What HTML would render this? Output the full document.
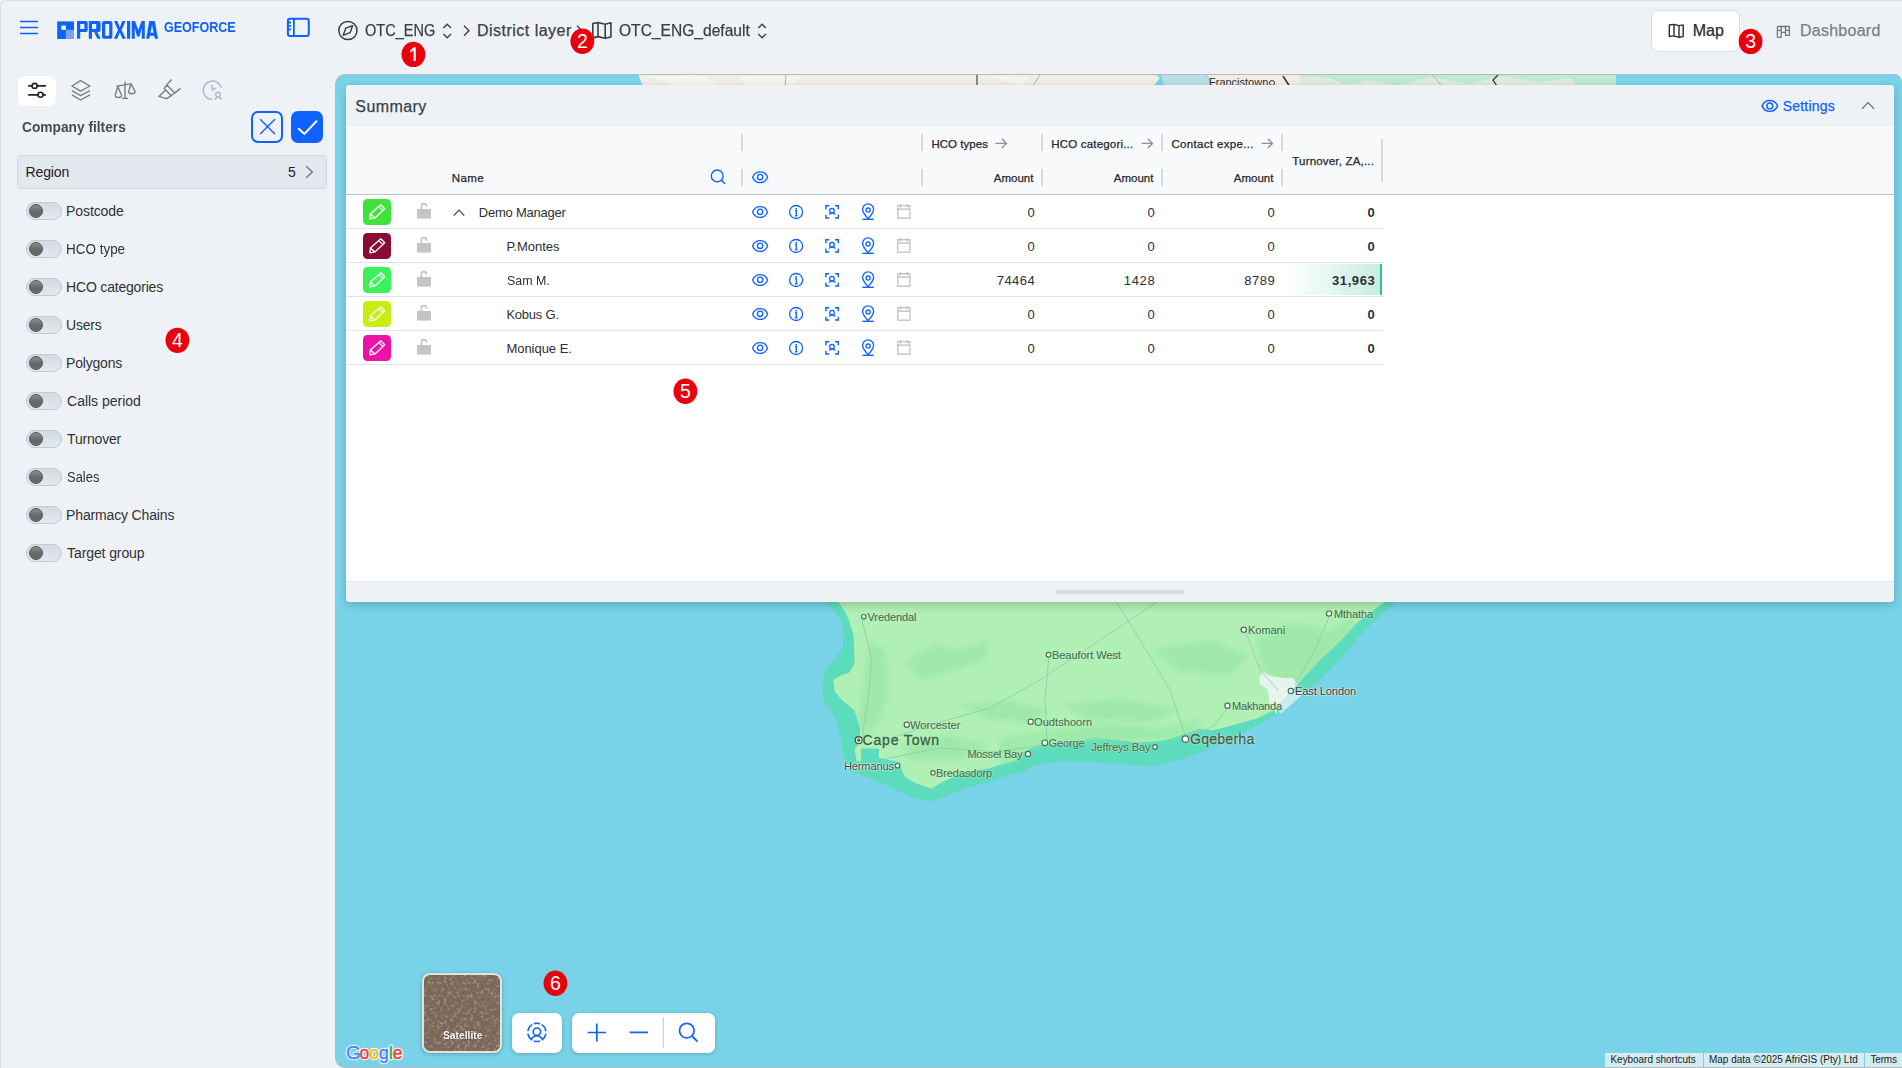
<!DOCTYPE html>
<html><head><meta charset="utf-8">
<style>
*{box-sizing:border-box;margin:0;padding:0}
html,body{width:1902px;height:1068px;overflow:hidden;background:#eef2f6;font-family:"Liberation Sans",sans-serif;color:#393c44}
.a{position:absolute}
svg{position:absolute;overflow:visible}
.tx{position:absolute;white-space:nowrap;line-height:1;z-index:50}
.badge{position:absolute;z-index:60;width:24px;height:24px;border-radius:50%;background:#e10010;color:#fff;font:bold 17px "Liberation Sans",sans-serif;text-align:center;line-height:24px}
#frame{position:absolute;left:0;top:0;width:1902px;height:1068px;border-top:1px solid #dde1e6;border-left:1px solid #dde1e6;border-top-left-radius:6px}
.tog{position:absolute;left:26px;width:36px;height:18px;border-radius:9px;border:1px solid #c3c9d0;background:linear-gradient(180deg,#d3dbe3,#e2e8ee)}
.tog i{position:absolute;left:2px;top:1px;width:14px;height:14px;border-radius:50%;background:linear-gradient(180deg,#8c8c8a,#666 60%,#6c6c6c);border:1px solid #53575c}
#map{position:absolute;left:335px;top:74px;width:1567px;height:994px;background:#78d3e9;border:1px solid #b4bcc0;border-right:0;border-radius:10px 8px 0 10px;overflow:hidden}
#panel{position:absolute;left:346px;top:85px;width:1548px;height:517px;background:#fff;border-radius:4px;overflow:hidden;box-shadow:0 3px 10px rgba(0,0,0,.2)}
.rsep{position:absolute;left:0;width:1037px;height:1px;background:#dfe2e6}
.sq{position:absolute;left:17px;width:28px;height:26px;border-radius:4.5px}
.ctl{position:absolute;background:#fff;border-radius:7px;box-shadow:0 1px 4px rgba(0,0,0,.2)}
.lbl{position:absolute;font-size:11px;line-height:1;color:#4f6f5a;white-space:nowrap;text-shadow:0 0 2px #c8f5cc,0 0 1px #c8f5cc}
.dot{position:absolute;width:6px;height:6px;border:1.3px solid #4f6f5a;border-radius:50%}
.vd{position:absolute;width:2px;background:#d5d8dc}
</style></head><body>
<div id="frame"></div>

<div class="a" style="left:1651px;top:9.5px;width:89px;height:42px;background:#fff;border:1px solid #dadde2;border-radius:7px"></div>

<div class="a" style="left:18px;top:76px;width:38px;height:30px;background:#fff;border-radius:6px;box-shadow:0 0 2px rgba(0,0,0,.07)"></div>
<div class="a" style="left:251px;top:111px;width:32px;height:32px;border:2px solid #0f62fe;border-radius:7px"></div>
<div class="a" style="left:291px;top:111px;width:32px;height:32px;background:#0f62fe;border-radius:7px"></div>
<div class="a" style="left:17px;top:155px;width:310px;height:34px;background:#e3e8ee;border:1px solid #d2d7dd;border-radius:4px"></div>
<div class="tog" style="top:202px"><i></i></div>
<div class="tog" style="top:240px"><i></i></div>
<div class="tog" style="top:278px"><i></i></div>
<div class="tog" style="top:316px"><i></i></div>
<div class="tog" style="top:354px"><i></i></div>
<div class="tog" style="top:392px"><i></i></div>
<div class="tog" style="top:430px"><i></i></div>
<div class="tog" style="top:468px"><i></i></div>
<div class="tog" style="top:506px"><i></i></div>
<div class="tog" style="top:544px"><i></i></div>

<div id="map">

<svg style="left:-336px;top:-75px" width="1902" height="1068">
 <defs>
  <clipPath id="land"><path d="M838 560 L838.4 602.1 L847.3 615.8 L853.6 634.7 L854.7 663.1 L849.4 672.6 L840 675.7 L833.6 679.9 L834.7 691.5 L842 700 L854.7 710.8 L860.5 729.7 L858.9 742.3 L854.7 749.7 L856.8 761.2 L861 761.2 L861 748.6 L878.9 748.6 L878.9 758.1 L899.9 762.3 L901 768.6 L905.2 777 L915.7 783.3 L931.4 788.6 L942 782.3 L957.7 774.9 L973.5 770.7 L989.3 768.6 L1000 764.4 L1015.8 760.2 L1028.4 748.6 L1042 744.4 L1073.6 741.3 L1094.6 737.1 L1110.4 739.2 L1136.7 742.3 L1155.6 741.3 L1168.2 739.2 L1184 733.9 L1200 728.6 L1212 730.4 L1230 725.9 L1257 718.4 L1275 709.4 L1290 692.9 L1299 682.4 L1320 660 L1339.4 642 L1357.4 622.5 L1384.3 602 L1400 560Z"/></clipPath>
  <filter id="soft" x="-10%" y="-10%" width="120%" height="120%"><feGaussianBlur stdDeviation="2.5"/></filter>
  <filter id="tex" x="0" y="0" width="100%" height="100%"><feTurbulence type="fractalNoise" baseFrequency="0.3" numOctaves="4" seed="11"/><feColorMatrix values="0 0 0 0 0.62  0 0 0 0 0.55  0 0 0 0 0.47  0 0 0 1.3 -0.62"/></filter>
 </defs>
 <!-- top strip land -->
 <path d="M637 70 L1150 70 L1160 78 L1150 90 L645 90 L641 82Z" fill="#f1eee6"/><path d="M650 76 L700 75 L720 84 L680 88Z M740 76 L800 77 L790 86 L745 85Z M990 76 L1030 78 L1020 86Z" fill="#f7f5f0"/>
 <path d="M1205 70 L1300 70 L1300 90 L1215 90 Z" fill="#f1ede4"/>
 <path d="M1160 70 L1205 70 L1212 90 L1165 90 Z" fill="#b9dfe6"/>
 <path d="M1300 70 L1616 70 L1616 90 L1300 90Z" fill="#bfe9d3"/>
 <path d="M1300 76 L1330 78 L1345 85 L1370 80 L1400 86 L1430 77 L1470 84 L1500 76 L1540 82 L1570 78 L1580 90 L1300 90Z" fill="#e9ecdf" opacity=".8"/>
 <path d="M977 74V90" stroke="#444" stroke-width="1.2"/><path d="M786 74L785 90" stroke="#9aa3c4" stroke-width="0.9"/>
 <path d="M1283 76L1292 90" stroke="#333" stroke-width="1.5"/>
 <path d="M1498 75L1493 80L1497 86" stroke="#333" stroke-width="1.3" fill="none"/>
 <path d="M1040 75L1030 90 M1432 74L1445 90" stroke="#aab0dd" stroke-width="1" fill="none"/>
 <text x="1209" y="86" font-family="Liberation Sans" font-size="11" fill="#333">Francistown</text>
 <circle cx="1272" cy="83" r="2.5" fill="none" stroke="#333" stroke-width="1"/>
 <!-- south africa -->
 <path d="M816 560 L825.2 602.1 L834.7 611.6 L841 621 L843.6 631.5 L843.1 647.3 L834.7 658.9 L826.3 668.3 L822.6 679.9 L823.1 700 L834.7 716 L840 737 L844.2 758.1 L849.4 770.7 L868.3 778.1 L884.1 784.4 L899.9 791.7 L915.7 799.1 L931.4 801.2 L947.2 796 L968.2 787.5 L989.3 782.3 L1000 778.1 L1026.3 770.7 L1033.6 765.5 L1063.1 760.7 L1094.6 762.3 L1126.2 764.4 L1152.5 766.5 L1178.8 760.2 L1200 753 L1245 731.9 L1278 713.9 L1303.4 694.4 L1320 679.4 L1335 664.4 L1350 648 L1365 630 L1396 602 L1420 560Z" fill="#5ddcbd"/>
 <path d="M838 560 L838.4 602.1 L847.3 615.8 L853.6 634.7 L854.7 663.1 L849.4 672.6 L840 675.7 L833.6 679.9 L834.7 691.5 L842 700 L854.7 710.8 L860.5 729.7 L858.9 742.3 L854.7 749.7 L856.8 761.2 L861 761.2 L861 748.6 L878.9 748.6 L878.9 758.1 L899.9 762.3 L901 768.6 L905.2 777 L915.7 783.3 L931.4 788.6 L942 782.3 L957.7 774.9 L973.5 770.7 L989.3 768.6 L1000 764.4 L1015.8 760.2 L1028.4 748.6 L1042 744.4 L1073.6 741.3 L1094.6 737.1 L1110.4 739.2 L1136.7 742.3 L1155.6 741.3 L1168.2 739.2 L1184 733.9 L1200 728.6 L1212 730.4 L1230 725.9 L1257 718.4 L1275 709.4 L1290 692.9 L1299 682.4 L1320 660 L1339.4 642 L1357.4 622.5 L1384.3 602 L1400 560Z" fill="#b1f0b5"/>
 <path d="M1000 738 L1050 730 L1100 724 L1160 728 L1200 719 L1200 728.6 L1184 733.9 L1168.2 739.2 L1110.4 739.2 L1073.6 741.3 L1042 744.4 L1028.4 748.6 L1015.8 760.2 L1000 764.4Z" fill="#9ae9a7" opacity=".8" filter="url(#soft)"/>
 <!-- darker patches -->
 <g clip-path="url(#land)"><g fill="#9de8a8" opacity=".9" filter="url(#soft)">
  <path d="M870 640 L885 650 L890 690 L880 720 L868 735 L858 725 L862 690Z"/>
  <path d="M905 660 L935 645 L960 650 L990 640 L985 660 L950 672 L920 680Z"/>
  <path d="M960 705 L1010 700 L1050 712 L1030 722 L990 720Z"/>
  <path d="M1060 705 L1120 698 L1180 710 L1150 722 L1090 720Z"/>
  <path d="M1060 740 L1120 730 L1160 735 L1120 742Z"/>
  <path d="M1150 650 L1210 640 L1250 655 L1230 675 L1180 672Z"/>
  <path d="M1255 640 L1290 622 L1330 630 L1350 618 L1362 630 L1320 670 L1300 684 L1285 690 L1262 668Z"/>
  <path d="M900 745 L950 735 L990 745 L960 760 L910 760Z"/>
 </g></g>
 <path d="M1259.2 677.9 L1263 672 L1270 676 L1284 678 L1293 678 L1297 684 L1290 693 L1278 705 L1276.4 714 L1269 702 L1268 690 L1260 684Z" fill="#e6f4ee"/>
 <path d="M1278 705 L1290 693 L1303 692 L1300 697 L1280 714Z" fill="#c8ebf0"/>
 <!-- roads -->
 <g stroke="#8cc9b4" stroke-width="1" fill="none" opacity=".8">
  <path d="M862 620 L872 660 L868 700 L862 738"/>
  <path d="M880 742 L930 725 L990 708 L1040 680 L1100 640 L1160 600"/>
  <path d="M1049 656 L1045 700 L1047 740"/>
  <path d="M1115 600 L1140 640 L1170 690 L1185 735"/>
  <path d="M1230 705 L1215 725 L1190 738"/>
  <path d="M1245 630 L1260 670 L1278 690"/>
  <path d="M1330 615 L1315 650 L1295 685"/>
  <path d="M880 760 L940 748 L1000 752 L1040 745"/>
 </g>
 <!-- labels dots -->
 <g fill="#fff" stroke="#46714f" stroke-width="1.2">
  <circle cx="863.8" cy="616.7" r="2.2"/><circle cx="1329" cy="613.6" r="2.6"/><circle cx="1243.7" cy="629.8" r="2.6"/>
  <circle cx="1048.5" cy="654.7" r="2.4"/><circle cx="1290.8" cy="691" r="2.6"/><circle cx="1227.5" cy="705.8" r="2.6"/>
  <circle cx="906.8" cy="724.7" r="2.6"/><circle cx="1030.7" cy="721.7" r="2.6"/><circle cx="1044.8" cy="742.8" r="2.8"/>
  <circle cx="1155" cy="746.9" r="2.2"/><circle cx="1185.4" cy="739" r="3.2"/><circle cx="1028" cy="754" r="2.6"/>
  <circle cx="897.6" cy="765.7" r="2.2"/><circle cx="933" cy="772.8" r="2.2"/>
 </g>
 <circle cx="858.7" cy="740.2" r="3.4" fill="#fff" stroke="#35633f" stroke-width="1.4"/><circle cx="858.7" cy="740.2" r="1.6" fill="#35633f"/>
 <!-- google logo -->
 <g font-family="Liberation Sans" fill="#fff" stroke="#fff" stroke-width="2.4" stroke-linejoin="round"><text x="346" y="1058.8" font-size="19">G</text><text x="359.4" y="1058.8" font-size="17.5">o</text><text x="369.2" y="1058.8" font-size="17.5">o</text><text x="379" y="1058.8" font-size="17.5">g</text><text x="388.9" y="1058.8" font-size="17.5">l</text><text x="392.7" y="1058.8" font-size="17.5">e</text></g>
 <g font-family="Liberation Sans" stroke-width="0.45"><text x="346" y="1058.8" font-size="19" fill="#4285f4" stroke="#4285f4">G</text><text x="359.4" y="1058.8" font-size="17.5" fill="#ea4335" stroke="#ea4335">o</text><text x="369.2" y="1058.8" font-size="17.5" fill="#fbbc05" stroke="#fbbc05">o</text><text x="379" y="1058.8" font-size="17.5" fill="#4285f4" stroke="#4285f4">g</text><text x="388.9" y="1058.8" font-size="17.5" fill="#34a853" stroke="#34a853">l</text><text x="392.7" y="1058.8" font-size="17.5" fill="#ea4335" stroke="#ea4335">e</text></g>
</svg>
<!-- satellite tile -->
<div class="a" style="left:86px;top:898px;width:80px;height:80px;border-radius:8px;border:2px solid #e2e2e2;overflow:hidden;background:#7a6856;box-shadow:0 1px 4px rgba(0,0,0,.25)">
 <svg style="left:0;top:0" width="79" height="79"><rect width="79" height="79" filter="url(#tex)"/></svg>
</div>
<!-- locate -->
<div class="ctl" style="left:176px;top:938px;width:50px;height:40px"></div>
<!-- zoom group -->
<div class="ctl" style="left:236.3px;top:938px;width:142.6px;height:40px"></div>
<!-- attribution -->
<div class="a" style="left:1269px;top:978px;width:98px;height:15px;background:rgba(245,245,245,.72)"></div>
<div class="a" style="left:1368px;top:978px;width:160px;height:15px;background:rgba(245,245,245,.72)"></div>
<div class="a" style="left:1529px;top:978px;width:37px;height:15px;background:rgba(245,245,245,.72)"></div>

</div>

<div id="panel">
 <div class="a" style="left:0;top:0;width:1548px;height:41px;background:#eef2f5"></div>
 <div class="a" style="left:0;top:41px;width:1548px;height:68px;background:#f7f9fb"></div>
 <div class="a" style="left:0;top:109px;width:1548px;height:1px;background:#bcc2ca"></div>
 <div class="a" style="left:0;top:496px;width:1548px;height:21px;background:#eef2f5;border-top:1px solid #e4e7eb"></div>
 <div class="a" style="left:710px;top:505px;width:128px;height:4px;background:#d7dade;border-radius:2px"></div>
 <div class="rsep" style="top:143px"></div>
 <div class="rsep" style="top:177px"></div>
 <div class="rsep" style="top:211px"></div>
 <div class="rsep" style="top:245px"></div>
 <div class="rsep" style="top:279px"></div>
 <div class="vd" style="left:395px;top:49px;height:17px"></div><div class="vd" style="left:395px;top:83.5px;height:17px"></div>
 <div class="vd" style="left:575px;top:49px;height:17px"></div><div class="vd" style="left:575px;top:83.5px;height:17px"></div>
 <div class="vd" style="left:695px;top:49px;height:17px"></div><div class="vd" style="left:695px;top:83.5px;height:17px"></div>
 <div class="vd" style="left:815px;top:49px;height:17px"></div><div class="vd" style="left:815px;top:83.5px;height:17px"></div>
 <div class="vd" style="left:935px;top:49px;height:17px"></div><div class="vd" style="left:935px;top:83.5px;height:17px"></div>
 <div class="vd" style="left:1035px;top:54px;height:42.5px"></div>
 <div class="a" style="left:938px;top:179.3px;width:98px;height:30.3px;background:linear-gradient(90deg,#ffffff,#e5f7f1 45%,#c6ece0)"></div><div class="a" style="left:1034px;top:179.3px;width:2px;height:30.3px;background:#27c397"></div>
 <div class="sq" style="top:114px;background:#41e23b"></div>
 <div class="sq" style="top:148px;background:#8a0b34"></div>
 <div class="sq" style="top:182px;background:#3ef05c"></div>
 <div class="sq" style="top:216px;background:#c7ed12"></div>
 <div class="sq" style="top:250px;background:#ec12a8"></div>
</div>
<svg style="left:0;top:0;z-index:45" width="1902" height="1068"><path d="M20 21.5H38M20 27.5H38M20 33.4H38" stroke="#0f62fe" stroke-width="1.5" fill="none"/><rect x="57.2" y="21.4" width="16.8" height="17.6" fill="#0f62fe"/><rect x="61.4" y="25.6" width="4.4" height="4.2" fill="#fff"/><rect x="65.8" y="29.8" width="8.2" height="9.2" fill="#75a3ff"/><path fill-rule="evenodd" fill="#0f62fe" d="M77 21H85.8Q87.7 21 87.7 23V30Q87.7 31.9 85.8 31.9H80.2V38.8H77Z M80.2 24V29.1H84.4V24Z M88.8 21H98.8Q100.6 21 100.6 23V30Q100.6 31.9 98.8 31.9H97.2L100.8 38.8H97.4L94 31.9H92V38.8H88.8Z M92 24V29.1H96.2V24Z M102 21H110.4Q112.4 21 112.4 23V36.8Q112.4 38.8 110.4 38.8H104Q102 38.8 102 36.8V23Q102 21 104 21Z M105.2 24V35.8H109.2V24Z M114 21H117.4L119.8 27.5L122.2 21H125.6L121.6 29.9L125.8 38.8H122.4L119.8 32.4L117.2 38.8H113.8L118 29.9Z M127 21H130.2V38.8H127Z M131.8 21H135L138.3 30L141.6 21H144.8V38.8H141.8V28L139.5 36.5H137.1L134.8 28V38.8H131.8Z M149.2 21H154.7L158 38.8H154.8L154.1 35.8H150L149.3 38.8H146.2Z M150.6 32.8H153.5L152.1 25Z"/><rect x="287.9" y="18.8" width="20.9" height="17.2" rx="2.2" fill="none" stroke="#0f62fe" stroke-width="2"/><path d="M293.9 18.8V36M288 22.5H291M288 25.9H291M288 29.4H291" stroke="#0f62fe" stroke-width="1.8" fill="none"/><circle cx="347.9" cy="30.5" r="9.1" fill="none" stroke="#3b3e45" stroke-width="1.5"/><path d="M343.2 35.3L345.8 28.2L352.7 25.6L350.1 32.7Z" fill="none" stroke="#3b3e45" stroke-width="1.4" stroke-linejoin="round"/><path d="M443.4 28L447.2 24.3L451.0 28M443.4 34L447.2 37.7L451.0 34" fill="none" stroke="#3b3e45" stroke-width="1.4"/><path d="M758.3000000000001 28L762.1 24.3L765.9 28M758.3000000000001 34L762.1 37.7L765.9 34" fill="none" stroke="#3b3e45" stroke-width="1.4"/><path d="M464 25.8L469 30.8L464 35.8" fill="none" stroke="#3b3e45" stroke-width="1.4"/><path d="M577 25.8L582 30.8L577 35.8" fill="none" stroke="#3b3e45" stroke-width="1.4"/><path d="M592.8 23.6L598 22.5L605.2 24.2L610.9 22.8V37L605.2 38.3L598 36.6L592.8 37.9Z M598 22.5V36.6 M605.2 24.2V38.3" fill="none" stroke="#3b3e45" stroke-width="1.6" stroke-linejoin="round"/><path d="M1669.3 25L1674 24.4L1679 25.6L1683.2 24.9V36.6L1679 37.3L1674 35.9L1669.3 36.5Z M1674 24.4V35.9 M1679 25.6V37.3" fill="none" stroke="#2a2d33" stroke-width="1.4" stroke-linejoin="round"/><path d="M1777.4 26.5H1789.4V35.3H1785.5V26.5 M1777.4 26.5V37.3H1781.2V26.5 M1781.2 32.4H1785.5 M1777.4 30.45H1781.2 M1785.5 30.45H1789.4" fill="none" stroke="#72767d" stroke-width="1.3" stroke-linejoin="round"/><path d="M28.2 85.9H45.9M28.2 94.8H45.9" stroke="#232323" stroke-width="1.8"/><circle cx="34.6" cy="85.9" r="2.5" fill="#fff" stroke="#232323" stroke-width="1.6"/><circle cx="40.5" cy="94.8" r="2.5" fill="#fff" stroke="#232323" stroke-width="1.6"/><path d="M80.6 80.6L90 86L80.6 91.2L71.9 86Z M71.9 90.7L80.6 95.7L90 90.7 M71.9 94.8L80.6 100L90 94.8" fill="none" stroke="#7d7d7d" stroke-width="1.4" stroke-linejoin="round"/><path d="M125 81.6V98.4 M122 98.4H128 M116.5 86.2L131.7 83.6 M117.8 86.6L115.2 95.3 M117.8 86.6L121.6 95.3 M131 83.8L128.6 91.6 M131 83.8L135.2 91.6" fill="none" stroke="#7d7d7d" stroke-width="1.4" stroke-linejoin="round"/><path d="M115.2 95.3A3.2 2.2 0 0 0 121.6 95.3 M128.6 91.6A3.3 2.2 0 0 0 135.2 91.6" fill="none" stroke="#7d7d7d" stroke-width="1.4"/><path d="M171.5 79.5L166.8 84.9 M166.8 85L164.3 88.4L171.2 95.8L174.6 92.8Z M174.6 93.1L180.5 88.4 M165.3 90.2L158.9 96.4L166.4 98.6L171.2 95.8" fill="none" stroke="#7d7d7d" stroke-width="1.4" stroke-linejoin="round"/><path d="M212.4 99.6A9.3 9.3 0 1 1 221.4 87.6 M212.2 84.9V90L216.4 87.9" fill="none" stroke="#b5bac1" stroke-width="1.5"/><circle cx="218" cy="94.6" r="2.3" fill="none" stroke="#b5bac1" stroke-width="1.5"/><path d="M214.6 99.8L216.6 97.6H219.6L221.6 99.8" fill="none" stroke="#b5bac1" stroke-width="1.5"/><path d="M260.2 119.3L274.9 133.9M274.9 119.3L260.2 133.9" stroke="#0f62fe" stroke-width="1.4"/><path d="M298.1 128.2L304.4 133.9L317 120.6" fill="none" stroke="#fff" stroke-width="2"/><path d="M306.2 166.3L312.3 172L306.2 177.7" fill="none" stroke="#6f737a" stroke-width="1.3"/><g transform="translate(363 199)"><path d="M7 19.9L7.4 15L17.8 5.8L21.7 9.8L11.9 18.9Z M15.8 7.6L19.8 11.6 M7.4 15L11.9 18.9" fill="none" stroke="#fff" stroke-width="1.3" stroke-linejoin="round"/></g><rect x="417" y="209" width="14" height="9.6" fill="#c4c4c4"/><path d="M421.3 209V206.2A2.6 2.6 0 0 1 426.5 206.2V206.8" fill="none" stroke="#c4c4c4" stroke-width="1.6"/><path d="M752.6 212C755.5 204.8 764.7 204.8 767.6 212C764.7 219.2 755.5 219.2 752.6 212Z" fill="none" stroke="#0f62fe" stroke-width="1.35"/><circle cx="760.1" cy="211.8" r="2.7" fill="none" stroke="#0f62fe" stroke-width="1.35"/><circle cx="796.1" cy="212" r="6.5" fill="none" stroke="#0f62fe" stroke-width="1.3"/><path d="M795 210.6H796.3V215.8 M794.8 215.9H797.6" fill="none" stroke="#0f62fe" stroke-width="1.3"/><circle cx="796.2" cy="208.7" r="0.95" fill="#0f62fe"/><path d="M825.9 209.2V205.8H829.2 M835 205.8H838.3V209.2 M838.3 214.8V218H835 M829.2 218H825.9V214.8" fill="none" stroke="#0f62fe" stroke-width="1.45"/><circle cx="832" cy="210.7" r="2.3" fill="none" stroke="#0f62fe" stroke-width="1.3"/><path d="M829 214.6L831 212.9H833.2L835.4 214.6" fill="none" stroke="#0f62fe" stroke-width="1.3"/><path d="M868.1 218.6C864.5 214.6 862.6 211.4 862.6 209.4A5.5 5.5 0 0 1 873.6 209.4C873.6 211.4 871.7 214.6 868.1 218.6Z" fill="none" stroke="#0f62fe" stroke-width="1.35"/><circle cx="868.1" cy="210.1" r="2.1" fill="none" stroke="#0f62fe" stroke-width="1.3"/><path d="M862.4 219.3H873.8" stroke="#0f62fe" stroke-width="1.4"/><rect x="897.8" y="205.7" width="12.1" height="12.5" fill="none" stroke="#b9bcc1" stroke-width="1.2"/><path d="M897.8 209.2H909.9 M900.5 204V207.5 M907.3 204V207.5" stroke="#b9bcc1" stroke-width="1.2"/><g transform="translate(363 233)"><path d="M7 19.9L7.4 15L17.8 5.8L21.7 9.8L11.9 18.9Z M15.8 7.6L19.8 11.6 M7.4 15L11.9 18.9" fill="none" stroke="#fff" stroke-width="1.3" stroke-linejoin="round"/></g><rect x="417" y="243" width="14" height="9.6" fill="#c4c4c4"/><path d="M421.3 243V240.2A2.6 2.6 0 0 1 426.5 240.2V240.8" fill="none" stroke="#c4c4c4" stroke-width="1.6"/><path d="M752.6 246C755.5 238.8 764.7 238.8 767.6 246C764.7 253.2 755.5 253.2 752.6 246Z" fill="none" stroke="#0f62fe" stroke-width="1.35"/><circle cx="760.1" cy="245.8" r="2.7" fill="none" stroke="#0f62fe" stroke-width="1.35"/><circle cx="796.1" cy="246" r="6.5" fill="none" stroke="#0f62fe" stroke-width="1.3"/><path d="M795 244.6H796.3V249.8 M794.8 249.9H797.6" fill="none" stroke="#0f62fe" stroke-width="1.3"/><circle cx="796.2" cy="242.7" r="0.95" fill="#0f62fe"/><path d="M825.9 243.2V239.8H829.2 M835 239.8H838.3V243.2 M838.3 248.8V252H835 M829.2 252H825.9V248.8" fill="none" stroke="#0f62fe" stroke-width="1.45"/><circle cx="832" cy="244.7" r="2.3" fill="none" stroke="#0f62fe" stroke-width="1.3"/><path d="M829 248.6L831 246.9H833.2L835.4 248.6" fill="none" stroke="#0f62fe" stroke-width="1.3"/><path d="M868.1 252.6C864.5 248.6 862.6 245.4 862.6 243.4A5.5 5.5 0 0 1 873.6 243.4C873.6 245.4 871.7 248.6 868.1 252.6Z" fill="none" stroke="#0f62fe" stroke-width="1.35"/><circle cx="868.1" cy="244.1" r="2.1" fill="none" stroke="#0f62fe" stroke-width="1.3"/><path d="M862.4 253.3H873.8" stroke="#0f62fe" stroke-width="1.4"/><rect x="897.8" y="239.7" width="12.1" height="12.5" fill="none" stroke="#b9bcc1" stroke-width="1.2"/><path d="M897.8 243.2H909.9 M900.5 238V241.5 M907.3 238V241.5" stroke="#b9bcc1" stroke-width="1.2"/><g transform="translate(363 267)"><path d="M7 19.9L7.4 15L17.8 5.8L21.7 9.8L11.9 18.9Z M15.8 7.6L19.8 11.6 M7.4 15L11.9 18.9" fill="none" stroke="#fff" stroke-width="1.3" stroke-linejoin="round"/></g><rect x="417" y="277" width="14" height="9.6" fill="#c4c4c4"/><path d="M421.3 277V274.2A2.6 2.6 0 0 1 426.5 274.2V274.8" fill="none" stroke="#c4c4c4" stroke-width="1.6"/><path d="M752.6 280C755.5 272.8 764.7 272.8 767.6 280C764.7 287.2 755.5 287.2 752.6 280Z" fill="none" stroke="#0f62fe" stroke-width="1.35"/><circle cx="760.1" cy="279.8" r="2.7" fill="none" stroke="#0f62fe" stroke-width="1.35"/><circle cx="796.1" cy="280" r="6.5" fill="none" stroke="#0f62fe" stroke-width="1.3"/><path d="M795 278.6H796.3V283.8 M794.8 283.9H797.6" fill="none" stroke="#0f62fe" stroke-width="1.3"/><circle cx="796.2" cy="276.7" r="0.95" fill="#0f62fe"/><path d="M825.9 277.2V273.8H829.2 M835 273.8H838.3V277.2 M838.3 282.8V286H835 M829.2 286H825.9V282.8" fill="none" stroke="#0f62fe" stroke-width="1.45"/><circle cx="832" cy="278.7" r="2.3" fill="none" stroke="#0f62fe" stroke-width="1.3"/><path d="M829 282.6L831 280.9H833.2L835.4 282.6" fill="none" stroke="#0f62fe" stroke-width="1.3"/><path d="M868.1 286.6C864.5 282.6 862.6 279.4 862.6 277.4A5.5 5.5 0 0 1 873.6 277.4C873.6 279.4 871.7 282.6 868.1 286.6Z" fill="none" stroke="#0f62fe" stroke-width="1.35"/><circle cx="868.1" cy="278.1" r="2.1" fill="none" stroke="#0f62fe" stroke-width="1.3"/><path d="M862.4 287.3H873.8" stroke="#0f62fe" stroke-width="1.4"/><rect x="897.8" y="273.7" width="12.1" height="12.5" fill="none" stroke="#b9bcc1" stroke-width="1.2"/><path d="M897.8 277.2H909.9 M900.5 272V275.5 M907.3 272V275.5" stroke="#b9bcc1" stroke-width="1.2"/><g transform="translate(363 301)"><path d="M7 19.9L7.4 15L17.8 5.8L21.7 9.8L11.9 18.9Z M15.8 7.6L19.8 11.6 M7.4 15L11.9 18.9" fill="none" stroke="#fff" stroke-width="1.3" stroke-linejoin="round"/></g><rect x="417" y="311" width="14" height="9.6" fill="#c4c4c4"/><path d="M421.3 311V308.2A2.6 2.6 0 0 1 426.5 308.2V308.8" fill="none" stroke="#c4c4c4" stroke-width="1.6"/><path d="M752.6 314C755.5 306.8 764.7 306.8 767.6 314C764.7 321.2 755.5 321.2 752.6 314Z" fill="none" stroke="#0f62fe" stroke-width="1.35"/><circle cx="760.1" cy="313.8" r="2.7" fill="none" stroke="#0f62fe" stroke-width="1.35"/><circle cx="796.1" cy="314" r="6.5" fill="none" stroke="#0f62fe" stroke-width="1.3"/><path d="M795 312.6H796.3V317.8 M794.8 317.9H797.6" fill="none" stroke="#0f62fe" stroke-width="1.3"/><circle cx="796.2" cy="310.7" r="0.95" fill="#0f62fe"/><path d="M825.9 311.2V307.8H829.2 M835 307.8H838.3V311.2 M838.3 316.8V320H835 M829.2 320H825.9V316.8" fill="none" stroke="#0f62fe" stroke-width="1.45"/><circle cx="832" cy="312.7" r="2.3" fill="none" stroke="#0f62fe" stroke-width="1.3"/><path d="M829 316.6L831 314.9H833.2L835.4 316.6" fill="none" stroke="#0f62fe" stroke-width="1.3"/><path d="M868.1 320.6C864.5 316.6 862.6 313.4 862.6 311.4A5.5 5.5 0 0 1 873.6 311.4C873.6 313.4 871.7 316.6 868.1 320.6Z" fill="none" stroke="#0f62fe" stroke-width="1.35"/><circle cx="868.1" cy="312.1" r="2.1" fill="none" stroke="#0f62fe" stroke-width="1.3"/><path d="M862.4 321.3H873.8" stroke="#0f62fe" stroke-width="1.4"/><rect x="897.8" y="307.7" width="12.1" height="12.5" fill="none" stroke="#b9bcc1" stroke-width="1.2"/><path d="M897.8 311.2H909.9 M900.5 306V309.5 M907.3 306V309.5" stroke="#b9bcc1" stroke-width="1.2"/><g transform="translate(363 335)"><path d="M7 19.9L7.4 15L17.8 5.8L21.7 9.8L11.9 18.9Z M15.8 7.6L19.8 11.6 M7.4 15L11.9 18.9" fill="none" stroke="#fff" stroke-width="1.3" stroke-linejoin="round"/></g><rect x="417" y="345" width="14" height="9.6" fill="#c4c4c4"/><path d="M421.3 345V342.2A2.6 2.6 0 0 1 426.5 342.2V342.8" fill="none" stroke="#c4c4c4" stroke-width="1.6"/><path d="M752.6 348C755.5 340.8 764.7 340.8 767.6 348C764.7 355.2 755.5 355.2 752.6 348Z" fill="none" stroke="#0f62fe" stroke-width="1.35"/><circle cx="760.1" cy="347.8" r="2.7" fill="none" stroke="#0f62fe" stroke-width="1.35"/><circle cx="796.1" cy="348" r="6.5" fill="none" stroke="#0f62fe" stroke-width="1.3"/><path d="M795 346.6H796.3V351.8 M794.8 351.9H797.6" fill="none" stroke="#0f62fe" stroke-width="1.3"/><circle cx="796.2" cy="344.7" r="0.95" fill="#0f62fe"/><path d="M825.9 345.2V341.8H829.2 M835 341.8H838.3V345.2 M838.3 350.8V354H835 M829.2 354H825.9V350.8" fill="none" stroke="#0f62fe" stroke-width="1.45"/><circle cx="832" cy="346.7" r="2.3" fill="none" stroke="#0f62fe" stroke-width="1.3"/><path d="M829 350.6L831 348.9H833.2L835.4 350.6" fill="none" stroke="#0f62fe" stroke-width="1.3"/><path d="M868.1 354.6C864.5 350.6 862.6 347.4 862.6 345.4A5.5 5.5 0 0 1 873.6 345.4C873.6 347.4 871.7 350.6 868.1 354.6Z" fill="none" stroke="#0f62fe" stroke-width="1.35"/><circle cx="868.1" cy="346.1" r="2.1" fill="none" stroke="#0f62fe" stroke-width="1.3"/><path d="M862.4 355.3H873.8" stroke="#0f62fe" stroke-width="1.4"/><rect x="897.8" y="341.7" width="12.1" height="12.5" fill="none" stroke="#b9bcc1" stroke-width="1.2"/><path d="M897.8 345.2H909.9 M900.5 340V343.5 M907.3 340V343.5" stroke="#b9bcc1" stroke-width="1.2"/><path d="M453.7 215.6L459 210.2L464.3 215.6" fill="none" stroke="#3b3e45" stroke-width="1.2"/><circle cx="717.2" cy="175.9" r="5.9" fill="none" stroke="#0f62fe" stroke-width="1.4"/><path d="M721.4 180.2L725 183.8" stroke="#0f62fe" stroke-width="1.5"/><path d="M752.6 177.2C755.5 170 764.7 170 767.6 177.2C764.7 184.4 755.5 184.4 752.6 177.2Z" fill="none" stroke="#0f62fe" stroke-width="1.35"/><circle cx="760.1" cy="177" r="2.7" fill="none" stroke="#0f62fe" stroke-width="1.35"/><path d="M995.5 143.4H1006.5 M1001.8 138.8L1006.5 143.4L1001.8 148" fill="none" stroke="#8d9096" stroke-width="1.4"/><path d="M1141.5 143.4H1152.5 M1147.8 138.8L1152.5 143.4L1147.8 148" fill="none" stroke="#8d9096" stroke-width="1.4"/><path d="M1261.5 143.4H1272.5 M1267.8 138.8L1272.5 143.4L1267.8 148" fill="none" stroke="#8d9096" stroke-width="1.4"/><path d="M1762 105.9C1765.2 98.6 1774.4 98.6 1777.6 105.9C1774.4 113.2 1765.2 113.2 1762 105.9Z" fill="none" stroke="#0f62fe" stroke-width="1.45"/><circle cx="1769.8" cy="105.9" r="2.9" fill="none" stroke="#0f62fe" stroke-width="1.45"/><path d="M1862.2 108.8L1868.1 102.6L1874 108.8" fill="none" stroke="#6f737a" stroke-width="1.3"/><path d="M534.54 1023.61A9.1 9.1 0 0 1 539.26 1023.61M542.12 1024.95A9.1 9.1 0 0 1 545.80 1030.51M545.80 1034.29A9.1 9.1 0 0 1 542.12 1039.85M539.26 1041.19A9.1 9.1 0 0 1 534.54 1041.19M531.68 1039.85A9.1 9.1 0 0 1 528.00 1034.29M528.00 1030.51A9.1 9.1 0 0 1 531.68 1024.95" fill="none" stroke="#0f62fe" stroke-width="1.6" stroke-linecap="round"/><circle cx="536.9" cy="1031.7" r="3.7" fill="none" stroke="#0f62fe" stroke-width="1.6"/><path d="M530.9 1039.2Q536.9 1032.2 542.9 1039.2" fill="none" stroke="#0f62fe" stroke-width="1.6"/><path d="M596.8 1023.6V1041.5M587.6 1032.5H606 M629.7 1032.3H648" stroke="#0f62fe" stroke-width="1.7"/><path d="M663.3 1017.3V1048.4" stroke="#bcc6d4" stroke-width="1"/><circle cx="686.8" cy="1030.6" r="7.3" fill="none" stroke="#0f62fe" stroke-width="1.7"/><path d="M692 1036L697.6 1041.6" stroke="#0f62fe" stroke-width="1.8"/></svg>
<svg style="left:0;top:0;z-index:60" width="1902" height="1068"><ellipse cx="413.4" cy="54.4" rx="11.9" ry="12.7" fill="#e8000c"/><path d="M410.2 50.5L413.79999999999995 47.199999999999996H415.7V61.0H413.59999999999997V50.199999999999996L410.2 52.8Z" fill="#fff"/><ellipse cx="582.35" cy="41.3" rx="11.9" ry="12.7" fill="#e8000c"/><text x="582.45" y="48.199999999999996" text-anchor="middle" font-family="Liberation Sans" font-size="19.5" fill="#fff">2</text><ellipse cx="1750.55" cy="41.4" rx="11.9" ry="12.7" fill="#e8000c"/><text x="1750.6499999999999" y="48.3" text-anchor="middle" font-family="Liberation Sans" font-size="19.5" fill="#fff">3</text><ellipse cx="177.4" cy="340.35" rx="11.9" ry="12.7" fill="#e8000c"/><text x="177.5" y="347.25" text-anchor="middle" font-family="Liberation Sans" font-size="19.5" fill="#fff">4</text><ellipse cx="685.4" cy="391.2" rx="11.9" ry="12.7" fill="#e8000c"/><text x="685.5" y="398.09999999999997" text-anchor="middle" font-family="Liberation Sans" font-size="19.5" fill="#fff">5</text><ellipse cx="555.45" cy="983.3" rx="11.9" ry="12.7" fill="#e8000c"/><text x="555.5500000000001" y="990.1999999999999" text-anchor="middle" font-family="Liberation Sans" font-size="19.5" fill="#fff">6</text></svg>
<div class="tx" style="left:164.00px;top:20.00px;font-size:14.5px;font-weight:bold;color:#0f62fe;letter-spacing:0.000px;transform:scaleX(0.8643);transform-origin:0.00px 0;">GEOFORCE</div>
<div class="tx" style="left:364.70px;top:23.00px;font-size:16px;font-weight:normal;color:#3b3e45;letter-spacing:0.000px;transform:scaleX(0.9077);transform-origin:0.00px 0;-webkit-text-stroke:0.25px currentColor;">OTC_ENG</div>
<div class="tx" style="left:476.90px;top:23.00px;font-size:16px;font-weight:normal;color:#3b3e45;letter-spacing:0.494px;-webkit-text-stroke:0.25px currentColor;">District layer</div>
<div class="tx" style="left:618.70px;top:23.00px;font-size:16px;font-weight:normal;color:#3b3e45;letter-spacing:0.000px;transform:scaleX(0.9738);transform-origin:0.00px 0;-webkit-text-stroke:0.25px currentColor;">OTC_ENG_default</div>
<div class="tx" style="left:1692.70px;top:23.00px;font-size:16px;font-weight:normal;color:#2a2d33;letter-spacing:0.037px;-webkit-text-stroke:0.25px currentColor;">Map</div>
<div class="tx" style="left:1800.00px;top:23.00px;font-size:16px;font-weight:normal;color:#7b7f86;letter-spacing:0.253px;-webkit-text-stroke:0.25px currentColor;">Dashboard</div>
<div class="tx" style="left:21.50px;top:119.00px;font-size:15px;font-weight:bold;color:#4a4a4e;letter-spacing:0.000px;transform:scaleX(0.9158);transform-origin:0.00px 0;">Company filters</div>
<div class="tx" style="left:25.50px;top:165.00px;font-size:14px;font-weight:normal;color:#1f2126;letter-spacing:-0.116px;">Region</div>
<div class="tx" style="left:288.00px;top:165.00px;font-size:14px;font-weight:normal;color:#1f2126;letter-spacing:0.000px;">5</div>
<div class="tx" style="left:66.10px;top:204.00px;font-size:14px;font-weight:normal;color:#2f3238;letter-spacing:-0.112px;">Postcode</div>
<div class="tx" style="left:66.10px;top:242.00px;font-size:14px;font-weight:normal;color:#2f3238;letter-spacing:0.000px;transform:scaleX(0.9608);transform-origin:1.00px 0;">HCO type</div>
<div class="tx" style="left:66.10px;top:280.00px;font-size:14px;font-weight:normal;color:#2f3238;letter-spacing:-0.192px;">HCO categories</div>
<div class="tx" style="left:66.10px;top:318.00px;font-size:14px;font-weight:normal;color:#2f3238;letter-spacing:-0.215px;">Users</div>
<div class="tx" style="left:66.10px;top:356.00px;font-size:14px;font-weight:normal;color:#2f3238;letter-spacing:-0.199px;">Polygons</div>
<div class="tx" style="left:67.10px;top:394.00px;font-size:14px;font-weight:normal;color:#2f3238;letter-spacing:-0.022px;">Calls period</div>
<div class="tx" style="left:67.10px;top:432.00px;font-size:14px;font-weight:normal;color:#2f3238;letter-spacing:-0.191px;">Turnover</div>
<div class="tx" style="left:67.10px;top:470.00px;font-size:14px;font-weight:normal;color:#2f3238;letter-spacing:0.000px;transform:scaleX(0.9252);transform-origin:0.00px 0;">Sales</div>
<div class="tx" style="left:66.10px;top:508.00px;font-size:14px;font-weight:normal;color:#2f3238;letter-spacing:-0.156px;">Pharmacy Chains</div>
<div class="tx" style="left:67.10px;top:546.00px;font-size:14px;font-weight:normal;color:#2f3238;letter-spacing:-0.102px;">Target group</div>
<div class="tx" style="left:355.30px;top:99.00px;font-size:16px;font-weight:normal;color:#3d4047;letter-spacing:0.408px;-webkit-text-stroke:0.25px currentColor;">Summary</div>
<div class="tx" style="left:1782.80px;top:99.00px;font-size:14px;font-weight:normal;color:#0f62fe;letter-spacing:0.188px;-webkit-text-stroke:0.25px currentColor;">Settings</div>
<div class="tx" style="left:451.70px;top:173.00px;font-size:11.5px;font-weight:normal;color:#25282d;letter-spacing:0.407px;-webkit-text-stroke:0.25px currentColor;">Name</div>
<div class="tx" style="left:931.40px;top:139.00px;font-size:11.5px;font-weight:normal;color:#25282d;letter-spacing:0.039px;-webkit-text-stroke:0.25px currentColor;">HCO types</div>
<div class="tx" style="left:1051.30px;top:139.00px;font-size:11.5px;font-weight:normal;color:#25282d;letter-spacing:0.182px;-webkit-text-stroke:0.25px currentColor;">HCO categori...</div>
<div class="tx" style="left:1171.40px;top:139.00px;font-size:11.5px;font-weight:normal;color:#25282d;letter-spacing:0.339px;-webkit-text-stroke:0.25px currentColor;">Contact expe...</div>
<div class="tx" style="left:1292.30px;top:156.00px;font-size:11.5px;font-weight:normal;color:#25282d;letter-spacing:0.185px;-webkit-text-stroke:0.25px currentColor;">Turnover, ZA,...</div>
<div class="tx" style="left:993.76px;top:173.00px;font-size:11.5px;font-weight:normal;color:#25282d;letter-spacing:0.000px;-webkit-text-stroke:0.25px currentColor;">Amount</div>
<div class="tx" style="left:1113.76px;top:173.00px;font-size:11.5px;font-weight:normal;color:#25282d;letter-spacing:0.000px;-webkit-text-stroke:0.25px currentColor;">Amount</div>
<div class="tx" style="left:1233.76px;top:173.00px;font-size:11.5px;font-weight:normal;color:#25282d;letter-spacing:0.000px;-webkit-text-stroke:0.25px currentColor;">Amount</div>
<div class="tx" style="left:478.80px;top:206.00px;font-size:13px;font-weight:normal;color:#2c2f35;letter-spacing:-0.233px;">Demo Manager</div>
<div class="tx" style="left:1027.40px;top:206.00px;font-size:13px;font-weight:normal;color:#2c2f35;letter-spacing:0.000px;">0</div>
<div class="tx" style="left:1147.40px;top:206.00px;font-size:13px;font-weight:normal;color:#2c2f35;letter-spacing:0.000px;">0</div>
<div class="tx" style="left:1267.40px;top:206.00px;font-size:13px;font-weight:normal;color:#2c2f35;letter-spacing:0.000px;">0</div>
<div class="tx" style="left:1367.50px;top:206.00px;font-size:13px;font-weight:bold;color:#2c2f35;letter-spacing:0.000px;">0</div>
<div class="tx" style="left:506.40px;top:240.00px;font-size:13px;font-weight:normal;color:#2c2f35;letter-spacing:-0.020px;">P.Montes</div>
<div class="tx" style="left:1027.40px;top:240.00px;font-size:13px;font-weight:normal;color:#2c2f35;letter-spacing:0.000px;">0</div>
<div class="tx" style="left:1147.40px;top:240.00px;font-size:13px;font-weight:normal;color:#2c2f35;letter-spacing:0.000px;">0</div>
<div class="tx" style="left:1267.40px;top:240.00px;font-size:13px;font-weight:normal;color:#2c2f35;letter-spacing:0.000px;">0</div>
<div class="tx" style="left:1367.50px;top:240.00px;font-size:13px;font-weight:bold;color:#2c2f35;letter-spacing:0.000px;">0</div>
<div class="tx" style="left:507.40px;top:274.00px;font-size:13px;font-weight:normal;color:#2c2f35;letter-spacing:0.000px;transform:scaleX(0.9531);transform-origin:0.00px 0;">Sam M.</div>
<div class="tx" style="left:996.80px;top:274.00px;font-size:13px;font-weight:normal;color:#2c2f35;letter-spacing:0.420px;">74464</div>
<div class="tx" style="left:1123.80px;top:274.00px;font-size:13px;font-weight:normal;color:#2c2f35;letter-spacing:0.637px;">1428</div>
<div class="tx" style="left:1244.30px;top:274.00px;font-size:13px;font-weight:normal;color:#2c2f35;letter-spacing:0.470px;">8789</div>
<div class="tx" style="left:1332.00px;top:274.00px;font-size:13px;font-weight:bold;color:#2c2f35;letter-spacing:0.594px;">31,963</div>
<div class="tx" style="left:506.40px;top:308.00px;font-size:13px;font-weight:normal;color:#2c2f35;letter-spacing:-0.226px;">Kobus G.</div>
<div class="tx" style="left:1027.40px;top:308.00px;font-size:13px;font-weight:normal;color:#2c2f35;letter-spacing:0.000px;">0</div>
<div class="tx" style="left:1147.40px;top:308.00px;font-size:13px;font-weight:normal;color:#2c2f35;letter-spacing:0.000px;">0</div>
<div class="tx" style="left:1267.40px;top:308.00px;font-size:13px;font-weight:normal;color:#2c2f35;letter-spacing:0.000px;">0</div>
<div class="tx" style="left:1367.50px;top:308.00px;font-size:13px;font-weight:bold;color:#2c2f35;letter-spacing:0.000px;">0</div>
<div class="tx" style="left:506.40px;top:342.00px;font-size:13px;font-weight:normal;color:#2c2f35;letter-spacing:-0.028px;">Monique E.</div>
<div class="tx" style="left:1027.40px;top:342.00px;font-size:13px;font-weight:normal;color:#2c2f35;letter-spacing:0.000px;">0</div>
<div class="tx" style="left:1147.40px;top:342.00px;font-size:13px;font-weight:normal;color:#2c2f35;letter-spacing:0.000px;">0</div>
<div class="tx" style="left:1267.40px;top:342.00px;font-size:13px;font-weight:normal;color:#2c2f35;letter-spacing:0.000px;">0</div>
<div class="tx" style="left:1367.50px;top:342.00px;font-size:13px;font-weight:bold;color:#2c2f35;letter-spacing:0.000px;">0</div>
<div class="tx" style="left:442.50px;top:1030.00px;font-size:11px;font-weight:bold;color:#ffffff;letter-spacing:0.000px;transform:scaleX(0.9342);transform-origin:0.00px 0;text-shadow:0 0 2px rgba(0,0,0,.5);">Satellite</div>
<div class="tx" style="left:1610.50px;top:1055.00px;font-size:10px;font-weight:normal;color:#222;letter-spacing:-0.050px;">Keyboard shortcuts</div>
<div class="tx" style="left:1709.00px;top:1055.00px;font-size:10px;font-weight:normal;color:#222;letter-spacing:-0.013px;">Map data ©2025 AfriGIS (Pty) Ltd</div>
<div class="tx" style="left:1870.50px;top:1055.00px;font-size:10px;font-weight:normal;color:#222;letter-spacing:-0.180px;">Terms</div>
<div class="tx" style="left:867.50px;top:612.00px;font-size:11px;font-weight:normal;color:#46714f;letter-spacing:-0.100px;text-shadow:0 0 2px #c8f6cc,0 0 1px #c8f6cc;-webkit-text-stroke:0.15px currentColor;">Vredendal</div>
<div class="tx" style="left:1334.00px;top:609.00px;font-size:11px;font-weight:normal;color:#46714f;letter-spacing:-0.105px;text-shadow:0 0 2px #c8f6cc,0 0 1px #c8f6cc;-webkit-text-stroke:0.15px currentColor;">Mthatha</div>
<div class="tx" style="left:1248.00px;top:625.00px;font-size:11px;font-weight:normal;color:#46714f;letter-spacing:-0.031px;text-shadow:0 0 2px #c8f6cc,0 0 1px #c8f6cc;-webkit-text-stroke:0.15px currentColor;">Komani</div>
<div class="tx" style="left:1052.00px;top:650.00px;font-size:11px;font-weight:normal;color:#46714f;letter-spacing:-0.053px;text-shadow:0 0 2px #c8f6cc,0 0 1px #c8f6cc;-webkit-text-stroke:0.15px currentColor;">Beaufort West</div>
<div class="tx" style="left:1295.00px;top:686.00px;font-size:11px;font-weight:normal;color:#2f3a33;letter-spacing:-0.066px;text-shadow:0 0 2px #fff,0 0 2px #fff;">East London</div>
<div class="tx" style="left:1232.00px;top:701.00px;font-size:11px;font-weight:normal;color:#46714f;letter-spacing:-0.179px;text-shadow:0 0 2px #c8f6cc,0 0 1px #c8f6cc;-webkit-text-stroke:0.15px currentColor;">Makhanda</div>
<div class="tx" style="left:910.00px;top:720.00px;font-size:11px;font-weight:normal;color:#46714f;letter-spacing:0.056px;text-shadow:0 0 2px #c8f6cc,0 0 1px #c8f6cc;-webkit-text-stroke:0.15px currentColor;">Worcester</div>
<div class="tx" style="left:1034.00px;top:717.00px;font-size:11px;font-weight:normal;color:#46714f;letter-spacing:0.071px;text-shadow:0 0 2px #c8f6cc,0 0 1px #c8f6cc;-webkit-text-stroke:0.15px currentColor;">Oudtshoorn</div>
<div class="tx" style="left:862.50px;top:733.00px;font-size:14px;font-weight:normal;color:#35633f;letter-spacing:0.843px;text-shadow:0 0 2px #c8f6cc,0 0 1px #c8f6cc;-webkit-text-stroke:0.15px currentColor;-webkit-text-stroke:0.35px currentColor;">Cape Town</div>
<div class="tx" style="left:1048.50px;top:738.00px;font-size:11px;font-weight:normal;color:#46714f;letter-spacing:-0.114px;text-shadow:0 0 2px #c8f6cc,0 0 1px #c8f6cc;-webkit-text-stroke:0.15px currentColor;">George</div>
<div class="tx" style="left:1091.20px;top:742.00px;font-size:11px;font-weight:normal;color:#46714f;letter-spacing:-0.093px;text-shadow:0 0 2px #c8f6cc,0 0 1px #c8f6cc;-webkit-text-stroke:0.15px currentColor;">Jeffreys Bay</div>
<div class="tx" style="left:1190.00px;top:732.00px;font-size:14px;font-weight:normal;color:#35633f;letter-spacing:0.274px;text-shadow:0 0 2px #fff,0 0 1px #fff;-webkit-text-stroke:0.35px currentColor;">Gqeberha</div>
<div class="tx" style="left:967.40px;top:749.00px;font-size:11px;font-weight:normal;color:#46714f;letter-spacing:-0.195px;text-shadow:0 0 2px #c8f6cc,0 0 1px #c8f6cc;-webkit-text-stroke:0.15px currentColor;">Mossel Bay</div>
<div class="tx" style="left:844.00px;top:761.00px;font-size:11px;font-weight:normal;color:#3b4a40;letter-spacing:-0.120px;text-shadow:0 0 2px #fff,0 0 2px #fff;">Hermanus</div>
<div class="tx" style="left:936.00px;top:768.00px;font-size:11px;font-weight:normal;color:#46714f;letter-spacing:-0.083px;text-shadow:0 0 2px #c8f6cc,0 0 1px #c8f6cc;-webkit-text-stroke:0.15px currentColor;">Bredasdorp</div>
</body></html>
